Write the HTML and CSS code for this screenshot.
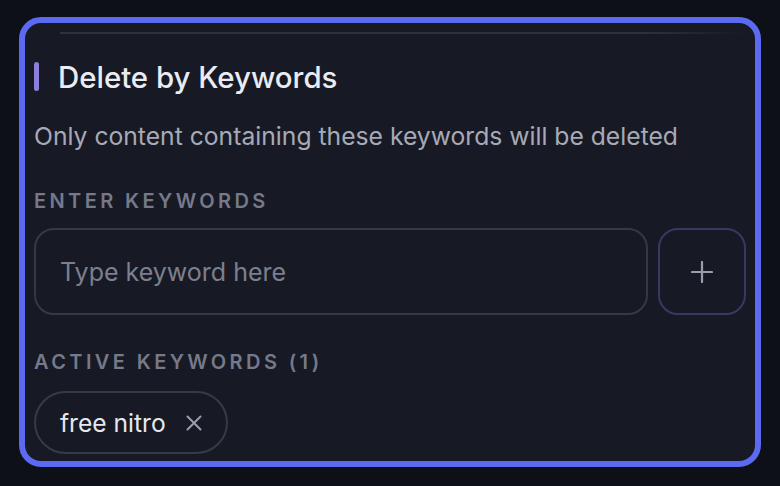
FILE: index.html
```html
<!DOCTYPE html>
<html>
<head>
<meta charset="utf-8">
<link rel="stylesheet" href="styles.css">
</head>
<body>
<div class="card">
  <div class="divider"></div>
  <div class="title-row">
    <span class="accent"></span>
    <h2 class="title">Delete by Keywords</h2>
  </div>
  <p class="desc">Only content containing these keywords will be deleted</p>
  <div class="label label-enter">ENTER KEYWORDS</div>
  <div class="input-row">
    <div class="input">Type keyword here</div>
    <button class="add" type="button">
      <svg width="22" height="22" viewBox="0 0 22 22"><path d="M11 1v20M1 11h20" stroke="#9b9dad" stroke-width="2.2" stroke-linecap="round" fill="none"/></svg>
    </button>
  </div>
  <div class="label label-active">ACTIVE KEYWORDS (1)</div>
  <div class="chips">
    <span class="chip">free nitro
      <svg class="x" width="16" height="16" viewBox="0 0 16 16"><path d="M1.5 1.5l13 13M14.5 1.5l-13 13" stroke="#9b9dad" stroke-width="2" stroke-linecap="round" fill="none"/></svg>
    </span>
  </div>
</div>
</body>
</html>
```
FILE: styles.css
```css
html, body {
  margin: 0;
  padding: 0;
  background: #0e1017;
}
body {
  font-family: Inter, "Noto Sans", "Liberation Sans", sans-serif;
  padding: 17px 19px;
  box-sizing: border-box;
  width: 780px;
  height: 486px;
}
.card {
  box-sizing: border-box;
  width: 742px;
  height: 450px;
  border: 6px solid #5b6af0;
  border-radius: 22px;
  background: #171a24;
  padding: 0 9px;
  overflow: hidden;
}
.divider {
  margin: 9px 0 0 26px;
  height: 2px;
  background: linear-gradient(to right, #2f323d 0%, #2f323d 85%, rgba(47,50,61,0) 100%);
}
.title-row {
  display: flex;
  align-items: center;
  margin-top: 27px;
  height: 30px;
}
.accent {
  width: 5px;
  height: 29px;
  border-radius: 3px;
  background: #8b7fd9;
  margin-right: 19px;
}
.title {
  margin: 0;
  padding-top: 3px;
  font-size: 29.4px;
  line-height: 30px;
  font-weight: 500;
  color: #eaecf3;
}
.desc {
  margin: 30px 0 0;
  font-size: 24.7px;
  line-height: 30px;
  color: #a7aab6;
}
.label {
  font-size: 20px;
  line-height: 24px;
  font-weight: 600;
  letter-spacing: 3.4px;
  color: #767989;
}
.label-enter { margin-top: 38px; }
.label-active { margin-top: 35px; }
.input-row {
  display: flex;
  gap: 10px;
  margin-top: 15px;
}
.input {
  flex: 1;
  box-sizing: border-box;
  height: 87px;
  border: 2px solid #353845;
  border-radius: 20px;
  display: flex;
  align-items: center;
  padding-left: 24px;
  font-size: 25px;
  color: #7c7f8e;
}
.add {
  box-sizing: border-box;
  width: 88px;
  height: 87px;
  border: 2px solid #3a3863;
  border-radius: 20px;
  background: transparent;
  display: flex;
  align-items: center;
  justify-content: center;
  padding: 0;
}
.chips {
  display: flex;
  margin-top: 17px;
}
.chip {
  box-sizing: border-box;
  height: 63px;
  border: 2px solid #373a46;
  border-radius: 32px;
  display: inline-flex;
  align-items: center;
  padding: 0 24px 0 24px;
  font-size: 24.6px;
  color: #e6e8ef;
}
.x {
  margin-left: 20px;
}
```
